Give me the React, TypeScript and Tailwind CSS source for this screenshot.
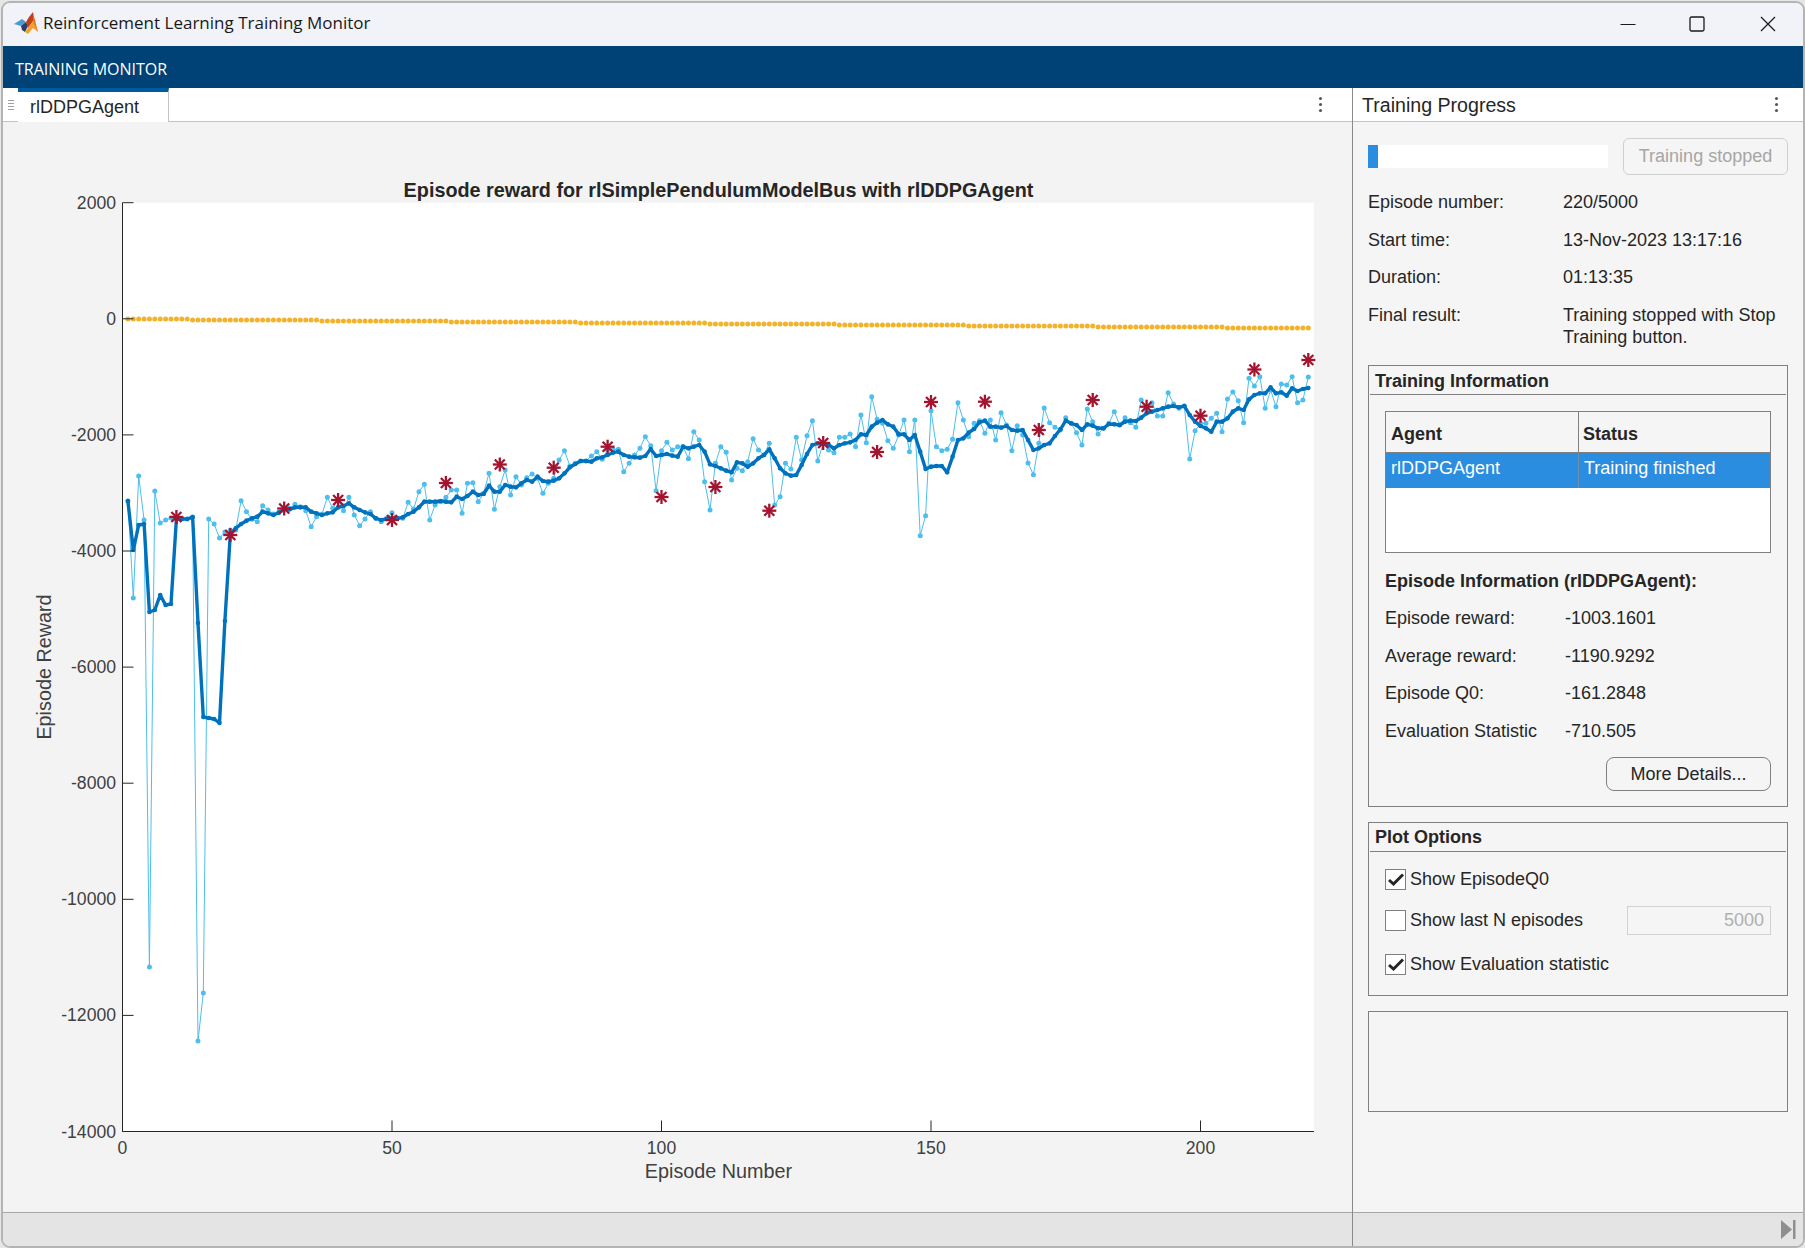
import React from 'react';

// y positions traced from the plot, in thirds of a pixel above a base line
const thirds = (base: number, vals: number[]) => vals.map((v) => base + v / 3);

const rawEarly = [501, 598, 476, 520, 967, 491, 523, 520, 518, 517, 519, 519, 517, 1041, 993, 519, 524, 538, 532, 530];
const avgEarly = [501, 550, 525, 524, 612, 610, 595, 605, 604, 519, 519, 519, 517, 623, 717, 718, 719, 723, 621, 534];

const raw = [
  ...rawEarly,
  ...thirds(300, [
    690, 602, 635, 658, 665, 617, 630, 642, 637, 625,
    625, 613, 620, 632, 680, 650, 643, 592, 625, 600,
    632, 592, 645, 677, 657, 635, 655, 665, 655, 638,
    655, 655, 607, 627, 575, 553, 660, 615, 605, 592,
    570, 570, 640, 550, 548, 605, 580, 520, 628, 560,
  ]),
  ...thirds(380, [
    270, 345, 290, 315, 293, 282, 295, 340, 310, 295,
    240, 212, 258, 250, 243, 243, 228, 215, 238, 210,
    208, 208, 275, 250, 225, 205, 170, 197, 332, 212,
    187, 210, 200, 200, 236, 155, 180, 305, 390, 250,
    200, 217, 300, 265, 272, 245, 176, 210, 225, 190,
    375, 350, 250, 267, 172, 240, 167, 122, 243, 190,
    210, 218, 172, 172, 162, 200, 105, 188, 50, 118,
    130, 182, 205, 165, 120, 215, 120, 467, 407, 92,
    200, 212, 208, 178, 68, 120, 170, 130, 122, 160,
    120, 180, 98, 135, 212, 137, 165, 249, 284, 190,
    84, 128, 142, 150, 113, 130, 158, 195, 87, 125,
    162, 145, 130, 95, 135, 113, 128, 142, 60, 90,
    68, 108, 108, 38, 72, 85, 78, 237, 152, 130,
    130, 115, 100, 155, 57, 36, 62, 128, -5, 18,
    -10, 85, 30, 80, 12, 15, -10, 68, 60, -9,
  ]),
];

const avg = [
  ...avgEarly,
  ...thirds(300, [
    685, 672, 662, 655, 650, 635, 640, 645, 638, 628,
    628, 622, 622, 622, 635, 640, 645, 640, 637, 622,
    618, 610, 622, 630, 637, 642, 655, 660, 657, 655,
    655, 652, 642, 635, 622, 605, 605, 605, 603, 605,
    607, 590, 597, 588, 575, 585, 582, 557, 575, 575,
  ]),
  ...thirds(380, [
    315, 320, 322, 310, 300, 305, 290, 303, 305, 302,
    295, 280, 262, 252, 243, 243, 245, 235, 232, 225,
    218, 215, 225, 230, 232, 233, 228, 207, 228, 225,
    222, 227, 230, 200, 205, 200, 195, 215, 253, 258,
    265, 272, 277, 247, 250, 260, 250, 235, 225, 208,
    235, 265, 280, 287, 285, 255, 222, 195, 190, 190,
    195, 205, 195, 190, 187, 180, 163, 165, 140, 128,
    120, 133, 140, 163, 163, 180, 165, 215, 267, 260,
    258, 258, 277, 230, 180, 175, 158, 147, 127, 122,
    140, 140, 143, 138, 150, 152, 150, 180, 210, 205,
    195, 190, 168, 148, 122, 130, 135, 150, 133, 137,
    145, 145, 132, 133, 135, 125, 122, 123, 113, 100,
    95, 90, 85, 80, 78, 82, 78, 105, 125, 138,
    145, 155, 125, 125, 115, 95, 85, 90, 58, 45,
    40, 40, 22, 40, 37, 47, 25, 33, 27, 24,
  ]),
];

// evaluation statistic, one star every ten episodes
const stars = [517, 535, 508.5, 500, 520, 483, 464.5, 467.7, 446.7, 497, 487, 510.7, 443, 452, 402, 401.7, 430, 400, 406.7, 415.7, 369.5, 360];

const epX = (i: number) => 122.5 + 5.39 * i;
const rewardY = (v: number) => 318.8 - v * 0.05805;
const points = (ys: number[]) => ys.map((y, k) => `${epX(k + 1).toFixed(1)},${y.toFixed(1)}`).join(' ');
const q0 = raw.map((_, k) => Math.round(319 + (k * 9.2) / 220));

const Chart = () => (
  <svg viewBox="3 122 1349 1090" className="block w-[1349px] h-[1090px]">
    <rect x="122.5" y="202.7" width="1191.5" height="928.8" fill="#fff" />
    {q0.map((y, k) => (
      <circle key={k} cx={epX(k + 1)} cy={y} r="2.5" fill="#f2b32a" />
    ))}
    <polyline points={points(raw)} fill="none" stroke="#4dbeee" strokeWidth="1" />
    {raw.map((y, k) => (
      <circle key={k} cx={epX(k + 1)} cy={y} r="2.5" fill="#4dbeee" />
    ))}
    <polyline points={points(avg)} fill="none" stroke="#0072bd" strokeWidth="3.4" strokeLinejoin="round" />
    {avg.map((y, k) => (
      <circle key={k} cx={epX(k + 1)} cy={y} r="2.3" fill="#0072bd" />
    ))}
    {stars.map((y, k) => {
      const x = epX((k + 1) * 10);
      return (
        <g key={k} stroke="#a2142f" strokeWidth="2.3">
          <line x1={x - 7} y1={y} x2={x + 7} y2={y} />
          <line x1={x} y1={y - 7} x2={x} y2={y + 7} />
          <line x1={x - 5} y1={y - 5} x2={x + 5} y2={y + 5} />
          <line x1={x - 5} y1={y + 5} x2={x + 5} y2={y - 5} />
        </g>
      );
    })}

    <g stroke="#262626" strokeWidth="1">
      <line x1="122.5" y1="202.7" x2="122.5" y2="1131.5" />
      <line x1="122.5" y1="1131.5" x2="1314" y2="1131.5" />
      {[2000, 0, -2000, -4000, -6000, -8000, -10000, -12000, -14000].map((v) => (
        <line key={v} x1="122.5" y1={rewardY(v)} x2="133.5" y2={rewardY(v)} />
      ))}
      {[0, 50, 100, 150, 200].map((v) => (
        <line key={v} x1={epX(v)} y1="1131.5" x2={epX(v)} y2="1120.5" />
      ))}
    </g>

    <g fill="#404040" fontSize="17.6" fontFamily="'Liberation Sans', Arial, sans-serif">
      {[2000, 0, -2000, -4000, -6000, -8000, -10000, -12000, -14000].map((v) => (
        <text key={v} x="116" y={rewardY(v) + 6} textAnchor="end">
          {v}
        </text>
      ))}
      {[0, 50, 100, 150, 200].map((v) => (
        <text key={v} x={epX(v)} y="1154" textAnchor="middle">
          {v}
        </text>
      ))}
    </g>
    <g fill="#262626" fontSize="19.8" fontFamily="'Liberation Sans', Arial, sans-serif" textAnchor="middle">
      <text x="718.5" y="197" fontWeight="700">
        Episode reward for rlSimplePendulumModelBus with rlDDPGAgent
      </text>
      <text x="718.5" y="1178" fill="#404040">
        Episode Number
      </text>
      <text transform="translate(50.5 667) rotate(-90)" fill="#404040">
        Episode Reward
      </text>
    </g>
  </svg>
);

const Kebab = () => (
  <div className="flex flex-col gap-[3px]">
    <span className="block w-[3px] h-[3px] rounded-full bg-[#555]" />
    <span className="block w-[3px] h-[3px] rounded-full bg-[#555]" />
    <span className="block w-[3px] h-[3px] rounded-full bg-[#555]" />
  </div>
);

const Check = ({ on }: { on: boolean }) => (
  <span className="flex items-center justify-center w-[21px] h-[21px] bg-white border border-[#808080]">
    {on && (
      <svg width="16" height="13" viewBox="0 0 16 13">
        <path d="M1 7 L5.5 11 L15 1.5" fill="none" stroke="#262626" strokeWidth="3" />
      </svg>
    )}
  </span>
);

const InfoRow = ({ label, value }: { label: string; value: string }) => (
  <div className="grid grid-cols-[195px_1fr] h-[37.5px] items-center">
    <span>{label}</span>
    <span>{value}</span>
  </div>
);

const EpisodeRow = ({ label, value }: { label: string; value: string }) => (
  <div className="grid grid-cols-[180px_1fr] h-[37.5px] items-center">
    <span>{label}</span>
    <span>{value}</span>
  </div>
);

export default function App() {
  return (
    <div className="w-[1805px] h-[1248px] pl-[1px] pt-[1px] bg-[#e6e6e6] overflow-hidden font-['Liberation_Sans',Arial,sans-serif] text-[18px] text-[#262626]">
      <div className="flex flex-col h-full border-2 border-[#b4b4b4] rounded-[9px] overflow-hidden">
        {/* title bar */}
        <div className="flex items-center h-[43px] shrink-0 bg-[#f1f3f8] text-[#1a1a1a]">
          <svg width="24" height="24" viewBox="0 0 24 24" className="ml-[11px] -mt-[3px]">
            <path d="M0 13 L8 8 L12 11 L7 15 Z" fill="#4a9ad4" />
            <path d="M7 15 L12 11 L14 15 L11 21 L8 19 Z" fill="#2b3f66" />
            <path d="M12 11 L15 6 L19 1 L19 10 L14 17 Z" fill="#c2401c" />
            <path d="M19 1 L24 21 L19 14 L19 10 Z" fill="#e2771f" />
            <path d="M14 17 L19 10 L24 21 L19 17 L14 23 L11 21 Z" fill="#f0a030" />
          </svg>
          <span className="ml-[5px] -mt-[3px] font-['Open_Sans',sans-serif] text-[17px]">Reinforcement Learning Training Monitor</span>
          <div className="flex items-center ml-auto pr-[27px] -mt-[2px]">
            <svg width="16" height="16" viewBox="0 0 16 16">
              <line x1="0.5" y1="8.5" x2="15.5" y2="8.5" stroke="#1a1a1a" strokeWidth="1.2" />
            </svg>
            <svg width="16" height="16" viewBox="0 0 16 16" className="ml-[53px]">
              <rect x="1" y="1" width="14" height="14" rx="1.5" fill="none" stroke="#1a1a1a" strokeWidth="1.3" />
            </svg>
            <svg width="16" height="16" viewBox="0 0 16 16" className="ml-[55px]">
              <path d="M1 1 L15 15 M15 1 L1 15" fill="none" stroke="#1a1a1a" strokeWidth="1.3" />
            </svg>
          </div>
        </div>

        {/* toolstrip */}
        <div className="flex items-center h-[42px] shrink-0 pl-[12px] pt-[4px] bg-[#004275] text-white font-['Open_Sans',sans-serif] text-[16px]">
          TRAINING MONITOR
        </div>

        <div className="flex flex-1 min-h-0">
          {/* document area */}
          <div className="flex flex-col w-[1349px] shrink-0">
            <div className="flex h-[34px] shrink-0 items-stretch bg-white border-b border-[#c4c4c4]">
              <div className="flex flex-col justify-center gap-[2px] w-[15px] pl-[5px] shrink-0">
                <span className="block w-[6px] h-px bg-[#a0a0a0]" />
                <span className="block w-[6px] h-px bg-[#a0a0a0]" />
                <span className="block w-[6px] h-px bg-[#a0a0a0]" />
                <span className="block w-[6px] h-px bg-[#a0a0a0]" />
              </div>
              <div className="flex items-center w-[151px] h-[35px] pl-[12px] bg-white border-t-4 border-r border-t-[#005a9e] border-r-[#c4c4c4]">
                <span>rlDDPGAgent</span>
              </div>
              <div className="flex items-center ml-auto pr-[30px]">
                <Kebab />
              </div>
            </div>
            <div className="flex-1 min-h-0 bg-[#f3f3f3]">
              <Chart />
            </div>
            <div className="h-[34px] shrink-0 bg-[#e4e4e4] border-t border-[#a8a8a8]" />
          </div>

          {/* training progress column */}
          <div className="flex flex-col flex-1 min-w-0 border-l border-[#8a8a8a]">
            <div className="flex items-center h-[34px] shrink-0 pl-[9px] pr-[25px] bg-white border-b border-[#c4c4c4] text-[19.6px]">
              <span className="mt-[3px]">Training Progress</span>
              <div className="ml-auto">
                <Kebab />
              </div>
            </div>

            <div className="flex flex-col flex-1 min-h-0 pt-[16px] px-[15px] bg-[#f5f5f5]">
              <div className="flex items-center justify-between h-[37px]">
                <div className="w-[240px] h-[23px] bg-white">
                  <div className="w-[10px] h-full bg-[#2a8de0]" />
                </div>
                <div className="flex items-center justify-center w-[165px] h-[37px] border border-[#cfcfcf] rounded-[6px] text-[#a6a6a6]">
                  Training stopped
                </div>
              </div>

              <div className="mt-[9px]">
                <InfoRow label="Episode number:" value="220/5000" />
                <InfoRow label="Start time:" value="13-Nov-2023 13:17:16" />
                <InfoRow label="Duration:" value="01:13:35" />
                <div className="grid grid-cols-[195px_1fr] mt-[7px] leading-[22px]">
                  <span>Final result:</span>
                  <span>
                    Training stopped with Stop
                    <br />
                    Training button.
                  </span>
                </div>
              </div>

              {/* training information */}
              <div className="flex flex-col h-[442px] mt-[17.5px] border border-[#808080]">
                <div className="flex items-center h-[29px] mx-[1px] pl-[5px] pt-[2px] border-b border-[#808080] font-bold">Training Information</div>
                <div className="px-[16px] pt-[16px]">
                  <div className="h-[142px] bg-white border border-[#808080]">
                    <div className="grid grid-cols-[193px_1fr] h-[41px] bg-[#f5f5f5] border-b border-[#808080] font-bold">
                      <div className="flex items-center pl-[5px] pt-[4px] border-r border-[#808080]">Agent</div>
                      <div className="flex items-center pl-[4px] pt-[4px]">Status</div>
                    </div>
                    <div className="grid grid-cols-[193px_1fr] h-[35px] bg-[#2a8de0] text-white">
                      <div className="flex items-center pl-[5px] pb-[4px] border-r border-[#6d8fae]">rlDDPGAgent</div>
                      <div className="flex items-center pl-[5px] pb-[4px]">Training finished</div>
                    </div>
                  </div>
                  <div className="mt-[15px] font-bold">Episode Information (rlDDPGAgent):</div>
                  <div className="mt-[5px]">
                    <EpisodeRow label="Episode reward:" value="-1003.1601" />
                    <EpisodeRow label="Average reward:" value="-1190.9292" />
                    <EpisodeRow label="Episode Q0:" value="-161.2848" />
                    <EpisodeRow label="Evaluation Statistic" value="-710.505" />
                  </div>
                  <div className="flex justify-end mt-[7px]">
                    <div className="flex items-center justify-center w-[165px] h-[34px] border border-[#808080] rounded-[8px]">More Details...</div>
                  </div>
                </div>
              </div>

              {/* plot options */}
              <div className="flex flex-col h-[174px] mt-[14.5px] border border-[#808080]">
                <div className="flex items-center h-[29px] mx-[1px] pl-[5px] pt-[2px] border-b border-[#808080] font-bold">Plot Options</div>
                <div className="flex flex-col pl-[16px] pr-[16px] pt-[17px]">
                  <label className="flex items-center gap-[4px] h-[21px]">
                    <Check on />
                    <span>Show EpisodeQ0</span>
                  </label>
                  <div className="flex items-center justify-between h-[21px] mt-[20px]">
                    <label className="flex items-center gap-[4px]">
                      <Check on={false} />
                      <span>Show last N episodes</span>
                    </label>
                    <div className="flex items-center justify-end w-[144px] h-[29px] pr-[6px] border border-[#d2d2d2] text-[#b0b0b0]">5000</div>
                  </div>
                  <label className="flex items-center gap-[4px] h-[21px] mt-[23px]">
                    <Check on />
                    <span>Show Evaluation statistic</span>
                  </label>
                </div>
              </div>

              <div className="h-[101px] mt-[15px] border border-[#808080]" />
            </div>

            <div className="flex items-center justify-end h-[34px] shrink-0 pr-[7px] bg-[#e4e4e4] border-t border-[#a8a8a8]">
              <svg width="15" height="19" viewBox="0 0 15 19">
                <path d="M0 0 L11 9.5 L0 19 Z" fill="#8f8f8f" />
                <rect x="12" y="0" width="2.5" height="19" fill="#8f8f8f" />
              </svg>
            </div>
          </div>
        </div>
      </div>
    </div>
  );
}
